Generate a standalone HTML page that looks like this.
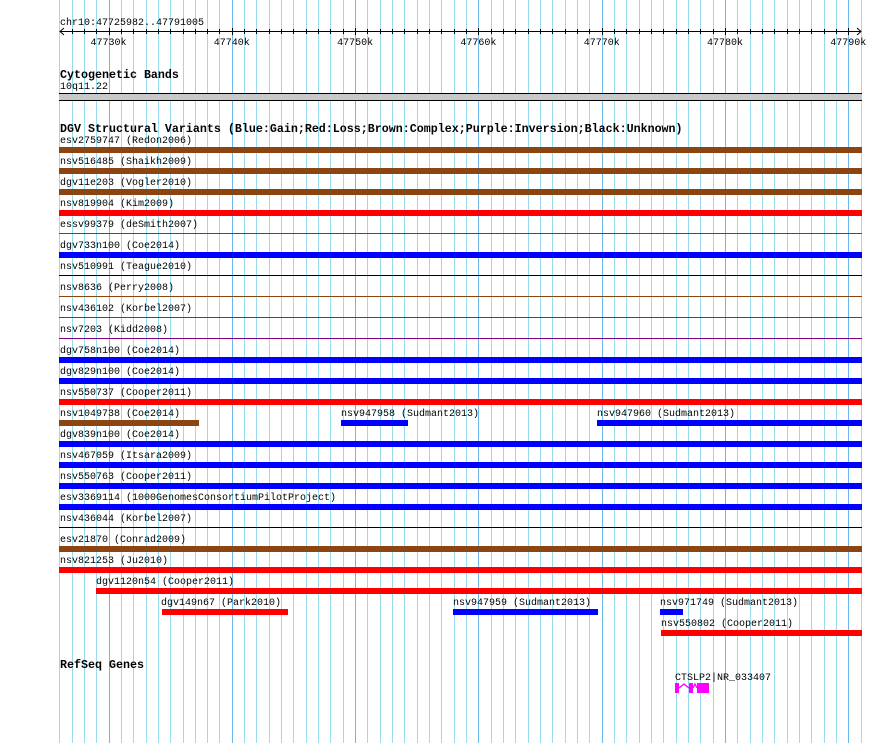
<!DOCTYPE html>
<html><head><meta charset="utf-8"><style>
html,body{margin:0;padding:0;background:#fff;width:890px;height:743px;overflow:hidden}
svg text{font-family:"Liberation Mono",monospace;font-size:10px;fill:#000}
svg text.b{font-weight:bold;font-size:11.67px}
</style></head><body>
<svg width="890" height="743" xmlns="http://www.w3.org/2000/svg" shape-rendering="crispEdges">
<g id="grid"></g>
<g id="content">
<text x="60" y="25">chr10:47725982..47791005</text>
<line x1="60" y1="31.5" x2="861" y2="31.5" stroke="#000"/>
<path d="M64 28 L60 31.5 L64 35 M857 28 L861 31.5 L857 35" fill="none" stroke="#000" shape-rendering="auto"/>
<g id="ticks"></g>
<text x="90.5" y="45">47730k</text>
<text x="213.8" y="45">47740k</text>
<text x="337.1" y="45">47750k</text>
<text x="460.4" y="45">47760k</text>
<text x="583.7" y="45">47770k</text>
<text x="707" y="45">47780k</text>
<text x="830.3" y="45">47790k</text>
<text class="b" x="60" y="78">Cytogenetic Bands</text>
<text x="60" y="89">10q11.22</text>
<rect x="59" y="93" width="803" height="8" fill="#c8c8c8"/>
<rect x="59" y="93" width="803" height="1" fill="#000"/>
<rect x="59" y="100" width="803" height="1" fill="#000"/>
<text class="b" x="60" y="132">DGV Structural Variants (Blue:Gain;Red:Loss;Brown:Complex;Purple:Inversion;Black:Unknown)</text>
<g id="rows"></g>
<text class="b" x="60" y="668">RefSeq Genes</text>
<text x="675" y="680">CTSLP2|NR_033407</text>
<g fill="#ff00ff">
<rect x="675" y="683" width="4" height="10"/>
<rect x="689" y="683" width="4" height="10"/>
<rect x="697" y="683" width="12" height="10"/>
</g>
<path d="M679 688 L684 684 L689 688 M693 688 L695 684 L697 688" fill="none" stroke="#ff00ff" stroke-width="1.3" shape-rendering="auto"/>
</g>
</svg>
<script>
var ns="http://www.w3.org/2000/svg";
function el(p,t,a){var e=document.createElementNS(ns,t);for(var k in a)e.setAttribute(k,a[k]);p.appendChild(e);return e;}
var g=document.getElementById('grid'),tk=document.getElementById('ticks');
for(var i=0;i<=65;i++){var x=59.2+i*12.33;var xr=Math.round(x);var major=(i%10===4);
el(g,'rect',{x:xr,y:0,width:1,height:743,fill:major?'#6cb8ea':'#98dcee'});
if(i>0&&i<65)el(tk,'rect',{x:xr,y:major?28:29,width:1,height:major?7:5,fill:'#000'});}
var B='#8b4513',R='#ff0000',U='#0000ff',K='#000000',P='#800080';
var rows=[
[[60,'esv2759747 (Redon2006)',59,862,B,0]],
[[60,'nsv516485 (Shaikh2009)',59,862,B,0]],
[[60,'dgv11e203 (Vogler2010)',59,862,B,0]],
[[60,'nsv819904 (Kim2009)',59,862,R,0]],
[[60,'essv99379 (deSmith2007)',59,862,R,1]],
[[60,'dgv733n100 (Coe2014)',59,862,U,0]],
[[60,'nsv510991 (Teague2010)',59,862,K,1]],
[[60,'nsv8636 (Perry2008)',59,862,B,1]],
[[60,'nsv436102 (Korbel2007)',59,862,R,1]],
[[60,'nsv7203 (Kidd2008)',59,862,P,1]],
[[60,'dgv758n100 (Coe2014)',59,862,U,0]],
[[60,'dgv829n100 (Coe2014)',59,862,U,0]],
[[60,'nsv550737 (Cooper2011)',59,862,R,0]],
[[60,'nsv1049738 (Coe2014)',59,199,B,0],[341,'nsv947958 (Sudmant2013)',341,408,U,0],[597,'nsv947960 (Sudmant2013)',597,862,U,0]],
[[60,'dgv839n100 (Coe2014)',59,862,U,0]],
[[60,'nsv467059 (Itsara2009)',59,862,U,0]],
[[60,'nsv550763 (Cooper2011)',59,862,U,0]],
[[60,'esv3369114 (1000GenomesConsortiumPilotProject)',59,862,U,0]],
[[60,'nsv436044 (Korbel2007)',59,862,K,1]],
[[60,'esv21870 (Conrad2009)',59,862,B,0]],
[[60,'nsv821253 (Ju2010)',59,862,R,0]],
[[96,'dgv1120n54 (Cooper2011)',96,862,R,0]],
[[161,'dgv149n67 (Park2010)',162,288,R,0],[453,'nsv947959 (Sudmant2013)',453,598,U,0],[660,'nsv971749 (Sudmant2013)',660,683,U,0]],
[[661,'nsv550802 (Cooper2011)',661,862,R,0]]
];
var rg=document.getElementById('rows');
rows.forEach(function(r,i){var by=147+i*21;r.forEach(function(f){
var t=el(rg,'text',{x:f[0],y:by-4});t.textContent=f[1];
if(f[5])el(rg,'rect',{x:f[2],y:by+2,width:f[3]-f[2],height:1,fill:f[4]});
else el(rg,'rect',{x:f[2],y:by,width:f[3]-f[2],height:6,fill:f[4]});});});
</script>
</body></html>
